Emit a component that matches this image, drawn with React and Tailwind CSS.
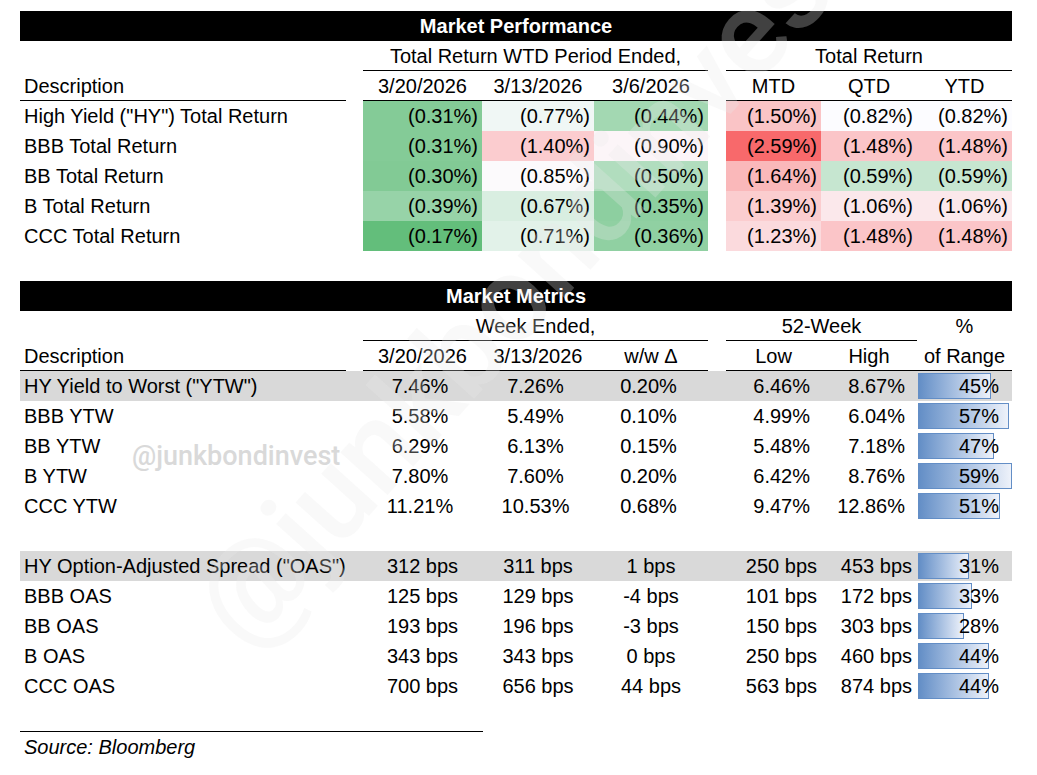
import React from "react";

const COLS = "grid grid-cols-[326px_17px_119px_112px_114px_18px_95px_96px_95px]";

const G = [99, 190, 123];
const WH = [252, 252, 255];
const R = [248, 105, 107];
function heat(v) {
  const mid = -0.82, max = -0.17, min = -2.59;
  let t, c;
  if (v >= mid) {
    t = (v - mid) / (max - mid);
    c = G;
  } else {
    t = (mid - v) / (mid - min);
    c = R;
  }
  const m = WH.map((w, i) => Math.round(w + (c[i] - w) * t));
  return `rgb(${m.join(",")})`;
}
const fmt = (v) => `(${Math.abs(v).toFixed(2)}%)`;

const perf = [
  ['High Yield ("HY") Total Return', [-0.31, -0.77, -0.44, -1.5, -0.82, -0.82]],
  ["BBB Total Return", [-0.31, -1.4, -0.9, -2.59, -1.48, -1.48]],
  ["BB Total Return", [-0.3, -0.85, -0.5, -1.64, -0.59, -0.59]],
  ["B Total Return", [-0.39, -0.67, -0.35, -1.39, -1.06, -1.06]],
  ["CCC Total Return", [-0.17, -0.71, -0.36, -1.23, -1.48, -1.48]],
];

const ytw = [
  ['HY Yield to Worst ("YTW")', "7.46%", "7.26%", "0.20%", "6.46%", "8.67%", 45, true],
  ["BBB YTW", "5.58%", "5.49%", "0.10%", "4.99%", "6.04%", 57],
  ["BB YTW", "6.29%", "6.13%", "0.15%", "5.48%", "7.18%", 47],
  ["B YTW", "7.80%", "7.60%", "0.20%", "6.42%", "8.76%", 59],
  ["CCC YTW", "11.21%", "10.53%", "0.68%", "9.47%", "12.86%", 51],
];
const oas = [
  ['HY Option-Adjusted Spread ("OAS")', "312 bps", "311 bps", "1 bps", "250 bps", "453 bps", 31, true],
  ["BBB OAS", "125 bps", "129 bps", "-4 bps", "101 bps", "172 bps", 33],
  ["BB OAS", "193 bps", "196 bps", "-3 bps", "150 bps", "303 bps", 28],
  ["B OAS", "343 bps", "343 bps", "0 bps", "250 bps", "460 bps", 44],
  ["CCC OAS", "700 bps", "656 bps", "44 bps", "563 bps", "874 bps", 44],
];

function TitleBar({ children }) {
  return (
    <div className="h-[30px] bg-black text-white font-bold flex items-center justify-center">
      {children}
    </div>
  );
}

function PerfRow({ label, vals }) {
  return (
    <div className={`${COLS} h-[30px]`}>
      <div className="flex items-center pl-[4px] whitespace-nowrap">{label}</div>
      <div />
      {vals.slice(0, 3).map((v, i) => (
        <div key={i} className="flex items-center justify-end pr-[4px]" style={{ backgroundColor: heat(v) }}>
          {fmt(v)}
        </div>
      ))}
      <div />
      {vals.slice(3).map((v, i) => (
        <div key={i} className="flex items-center justify-end pr-[4px]" style={{ backgroundColor: heat(v) }}>
          {fmt(v)}
        </div>
      ))}
    </div>
  );
}

function MetricRow({ r }) {
  const [label, a, b, c, lo, hi, pct, hl] = r;
  const isPct = a.endsWith("%");
  const cpad = isPct ? "pr-[5px]" : "";
  return (
    <div className={`${COLS} h-[30px] ${hl ? "bg-[#d9d9d9]" : ""}`}>
      <div className="flex items-center pl-[4px] whitespace-nowrap">{label}</div>
      <div />
      <div className={`flex items-center justify-center ${cpad}`}>{a}</div>
      <div className={`flex items-center justify-center ${cpad}`}>{b}</div>
      <div className={`flex items-center justify-center ${cpad}`}>{c}</div>
      <div />
      <div className={`flex items-center justify-end ${isPct ? "pr-[11px]" : "pr-[4px]"}`}>{lo}</div>
      <div className={`flex items-center justify-end ${isPct ? "pr-[12px]" : "pr-[5px]"}`}>{hi}</div>
      <div className="relative flex items-center justify-end pr-[13px]">
        <div
          className="absolute left-[1px] top-[2px] bottom-[2px] border border-[#638ec6] bg-linear-to-r from-[#638ec6] to-[#eef2fa]"
          style={{ width: `${Math.round(1.55 * pct + 3)}px` }}
        />
        <span className="relative">{pct}%</span>
      </div>
    </div>
  );
}

export default function App() {
  return (
    <div className="relative w-[1037px] h-[775px] bg-white overflow-hidden font-['Liberation_Sans',Arial,sans-serif] text-[20px] leading-none text-black">
      <div className="pl-[20px] pt-[11px] w-[1012px]">
        <TitleBar>Market Performance</TitleBar>
        <div className={`${COLS} h-[30px]`}>
          <div />
          <div />
          <div className="col-span-3 flex items-center justify-center border-b border-black">
            Total Return WTD Period Ended,
          </div>
          <div />
          <div className="col-span-3 flex items-center justify-center border-b border-black">Total Return</div>
        </div>
        <div className={`${COLS} h-[30px]`}>
          <div className="flex items-center pl-[4px] border-b border-black">Description</div>
          <div />
          <div className="flex items-center justify-center border-b border-black">3/20/2026</div>
          <div className="flex items-center justify-center border-b border-black">3/13/2026</div>
          <div className="flex items-center justify-center border-b border-black">3/6/2026</div>
          <div />
          <div className="flex items-center justify-center border-b border-black">MTD</div>
          <div className="flex items-center justify-center border-b border-black">QTD</div>
          <div className="flex items-center justify-center border-b border-black">YTD</div>
        </div>
        {perf.map(([l, v]) => (
          <PerfRow key={l} label={l} vals={v} />
        ))}
        <div className="h-[30px]" />

        <TitleBar>Market Metrics</TitleBar>
        <div className={`${COLS} h-[30px]`}>
          <div />
          <div />
          <div className="col-span-3 flex items-center justify-center border-b border-black">Week Ended,</div>
          <div />
          <div className="col-span-2 flex items-center justify-center border-b border-black">52-Week</div>
          <div className="flex items-center justify-center">%</div>
        </div>
        <div className={`${COLS} h-[30px]`}>
          <div className="flex items-center pl-[4px] border-b border-black">Description</div>
          <div />
          <div className="flex items-center justify-center border-b border-black">3/20/2026</div>
          <div className="flex items-center justify-center border-b border-black">3/13/2026</div>
          <div className="flex items-center justify-center border-b border-black">w/w Δ</div>
          <div />
          <div className="flex items-center justify-center border-b border-black">Low</div>
          <div className="flex items-center justify-center border-b border-black">High</div>
          <div className="flex items-center justify-center border-b border-black">of Range</div>
        </div>
        {ytw.map((r) => (
          <MetricRow key={r[0]} r={r} />
        ))}
        <div className="h-[30px]" />
        {oas.map((r) => (
          <MetricRow key={r[0]} r={r} />
        ))}
        <div className="h-[30px]" />
        <div className="w-[463px] border-t border-black h-[30px] flex items-center pl-[4px] italic">
          Source: Bloomberg
        </div>
      </div>

      <div className="pointer-events-none absolute left-[132px] top-[443px] font-['Roboto',sans-serif] font-medium text-[27px] leading-none text-[#d9d9d9] whitespace-nowrap">
        @junkbondinvest
      </div>
      <div className="pointer-events-none absolute left-[260px] top-[545px] origin-bottom-left rotate-[-48deg] font-['Roboto',sans-serif] font-medium text-[120px] leading-none text-[rgba(235,235,235,0.28)] whitespace-nowrap">
        @junkbondinvest
      </div>
    </div>
  );
}
